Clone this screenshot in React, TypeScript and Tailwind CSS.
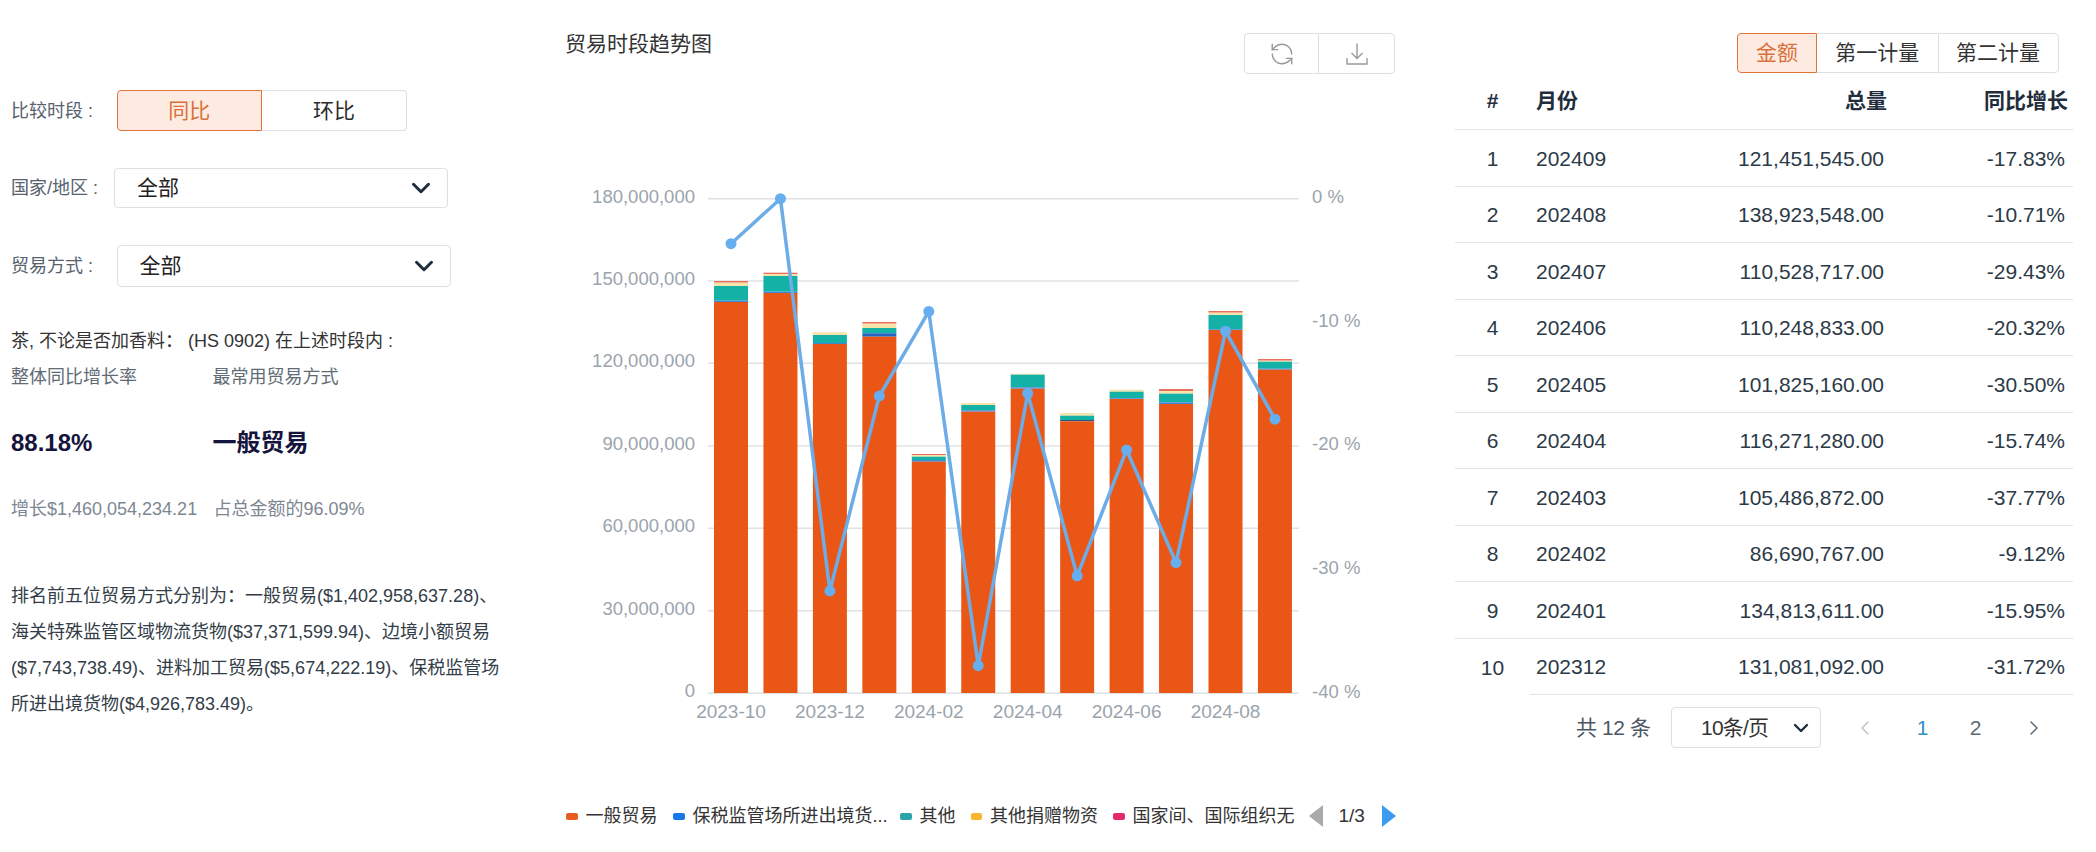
import { ChevronDown, ChevronLeft, ChevronRight, RefreshCcw } from 'lucide-react';

const ORANGE = '#ea5616';
const TEAL = '#14b1a6';
const CREAM = '#f6e3aa';
const RED = '#e86f5c';
const BLUE = '#3f86d6';

// chart drawn in page pixels (viewBox offset below), each bar listed top-down as [from, to, colour]
const bars: [number, number, string][][] = [
  [[281, 282.7, RED], [282.7, 286, CREAM], [286, 300.7, TEAL], [300.7, 302, BLUE], [302, 693, ORANGE]],
  [[272.7, 274, RED], [274, 276, CREAM], [276, 291.7, TEAL], [291.7, 293, BLUE], [293, 693, ORANGE]],
  [[332.3, 335, CREAM], [335, 343, TEAL], [343, 344, BLUE], [344, 693, ORANGE]],
  [[322, 323.7, RED], [323.7, 328, CREAM], [328, 333.3, TEAL], [333.3, 336.7, '#2364c4'], [336.7, 693, ORANGE]],
  [[454, 455, RED], [455, 456.7, CREAM], [456.7, 460, TEAL], [460, 461.7, BLUE], [461.7, 693, ORANGE]],
  [[403, 405, CREAM], [405, 410.3, TEAL], [410.3, 411.7, BLUE], [411.7, 693, ORANGE]],
  [[373.7, 374.7, CREAM], [374.7, 387.3, TEAL], [387.3, 388.7, BLUE], [388.7, 693, ORANGE]],
  [[413, 415.7, CREAM], [415.7, 420, TEAL], [420, 421.3, '#33507a'], [421.3, 693, ORANGE]],
  [[389.7, 391.7, CREAM], [391.7, 398.3, TEAL], [398.3, 399, BLUE], [399, 693, ORANGE]],
  [[389, 391, RED], [391, 393.7, CREAM], [393.7, 402.3, TEAL], [402.3, 404, BLUE], [404, 693, ORANGE]],
  [[311, 312.7, RED], [312.7, 315, CREAM], [315, 329.3, TEAL], [329.3, 330, BLUE], [330, 693, ORANGE]],
  [[359, 360.7, RED], [360.7, 361.7, CREAM], [361.7, 368.7, TEAL], [368.7, 369.7, BLUE], [369.7, 693, ORANGE]],
];

const growth = [-3.64, 0, -31.72, -15.95, -9.12, -37.77, -15.74, -30.5, -20.32, -29.43, -10.71, -17.83];

const leftTicks = [
  { y: 198.7, label: '180,000,000' },
  { y: 281, label: '150,000,000' },
  { y: 363.3, label: '120,000,000' },
  { y: 446, label: '90,000,000' },
  { y: 528.3, label: '60,000,000' },
  { y: 610.7, label: '30,000,000' },
  { y: 693.3, label: '0' },
];

const rightTicks = ['0 %', '-10 %', '-20 %', '-30 %', '-40 %'];
const months = ['2023-10', '2023-12', '2024-02', '2024-04', '2024-06', '2024-08'];

const rows = [
  ['202409', '121,451,545.00', '-17.83%'],
  ['202408', '138,923,548.00', '-10.71%'],
  ['202407', '110,528,717.00', '-29.43%'],
  ['202406', '110,248,833.00', '-20.32%'],
  ['202405', '101,825,160.00', '-30.50%'],
  ['202404', '116,271,280.00', '-15.74%'],
  ['202403', '105,486,872.00', '-37.77%'],
  ['202402', '86,690,767.00', '-9.12%'],
  ['202401', '134,813,611.00', '-15.95%'],
  ['202312', '131,081,092.00', '-31.72%'],
];

const legend = [
  { color: '#ea5b22', label: '一般贸易', gap: '' },
  { color: '#1677e8', label: '保税监管场所进出境货...', gap: 'ml-[15.5px]' },
  { color: '#2aa4a8', label: '其他', gap: 'ml-[12.5px]' },
  { color: '#f9b530', label: '其他捐赠物资', gap: 'ml-[15px]' },
  { color: '#e5296f', label: '国家间、国际组织无', gap: 'ml-[15px]' },
];

const barX = (i: number) => 731 + i * 49.45;
const lineY = (p: number) => 198.7 + (-p / 40) * 494.6;

function Chart() {
  const points = growth.map((p, i) => `${barX(i)},${lineY(p)}`).join(' ');
  return (
    <svg viewBox="566 180 850 560" className="mt-[106px] h-[560px] w-[850px]">
      {leftTicks.map((t) => (
        <g key={t.y}>
          <line x1="708" x2="1299" y1={t.y} y2={t.y} stroke="#dfe2e5" strokeWidth="1.5" />
          <text x="695" y={t.y - 1} textAnchor="end" dominantBaseline="middle" fontSize="18.5" fill="#9aa4ac">
            {t.label}
          </text>
        </g>
      ))}
      {rightTicks.map((t, i) => (
        <text key={t} x="1312" y={198 + i * 123.7} dominantBaseline="middle" fontSize="18.5" fill="#9aa4ac">
          {t}
        </text>
      ))}
      {months.map((m, i) => (
        <text key={m} x={barX(i * 2)} y="713" textAnchor="middle" dominantBaseline="middle" fontSize="19" fill="#9aa4ac">
          {m}
        </text>
      ))}
      {bars.map((segments, i) =>
        segments.map(([from, to, color]) => (
          <rect key={`${i}-${from}`} x={barX(i) - 17} y={from} width="34" height={to - from} fill={color} />
        )),
      )}
      <polyline points={points} fill="none" stroke="#6cade8" strokeWidth="3.5" strokeLinejoin="round" />
      {growth.map((p, i) => (
        <circle key={i} cx={barX(i)} cy={lineY(p)} r="5.5" fill="#66aeef" />
      ))}
    </svg>
  );
}

function Select({ className }: { className: string }) {
  return (
    <div className={`flex items-center justify-between rounded border border-[#dcdfe6] bg-white pl-[22px] pr-[11px] text-[21px] text-[#222] ${className}`}>
      全部
      <ChevronDown size={30} strokeWidth={2.4} className="text-[#1f2d3d]" />
    </div>
  );
}

export default function App() {
  const watermarks = [130, 503, 893, 1266, 1640, 2005].flatMap((x) => [287, 585].map((y) => ({ x, y })));

  return (
    <div className="relative flex h-[852px] w-[2096px] overflow-hidden bg-white font-['Liberation_Sans','Noto_Sans_CJK_SC',sans-serif]">
      {/* 左侧筛选 */}
      <div className="w-[566px] shrink-0 pl-[11px] pt-[90px] text-[18px] leading-[36px]">
        <div className="flex h-[41px] items-center">
          <span className="w-[105.5px] text-[#56626d]">比较时段 :</span>
          <div className="flex h-[41px] w-[290.5px] text-[21px]">
            <div className="flex w-[145.5px] items-center justify-center rounded-l border border-[#e2733b] bg-[#fdebe1] text-[#d9703a]">同比</div>
            <div className="flex flex-1 items-center justify-center rounded-r border border-l-0 border-[#dcdfe6] text-[#2b2b2b]">环比</div>
          </div>
        </div>
        <div className="mt-[37px] flex h-[40px] items-center">
          <span className="w-[103px] text-[#56626d]">国家/地区 :</span>
          <Select className="h-[40px] w-[334px]" />
        </div>
        <div className="mt-[37px] flex h-[42px] items-center">
          <span className="w-[105.5px] text-[#56626d]">贸易方式 :</span>
          <Select className="h-[42px] w-[334px]" />
        </div>
        <p className="mt-[36px] text-[#333]">茶, 不论是否加香料： (HS 0902) 在上述时段内 :</p>
        <div className="flex text-[#5f6c76]">
          <span className="w-[201.5px]">整体同比增长率</span>
          <span>最常用贸易方式</span>
        </div>
        <div className="mt-[30px] flex text-[24px] font-bold text-[#14143c]">
          <span className="w-[201.5px]">88.18%</span>
          <span>一般贸易</span>
        </div>
        <div className="mt-[30px] flex text-[#7d8791]">
          <span className="w-[202.5px]">增长$1,460,054,234.21</span>
          <span>占总金额的96.09%</span>
        </div>
        <p className="mt-[51px] w-[495px] text-[#333d47]">
          排名前五位贸易方式分别为：一般贸易($1,402,958,637.28)、海关特殊监管区域物流货物($37,371,599.94)、边境小额贸易($7,743,738.49)、进料加工贸易($5,674,222.19)、保税监管场所进出境货物($4,926,783.49)。
        </p>
      </div>

      {/* 趋势图 */}
      <div className="w-[889px] shrink-0 pt-[33px]">
        <div className="flex h-[41px] w-[829px] items-center justify-between">
          <h2 className="-ml-[1px] -mt-[20px] text-[21px] font-normal text-[#333]">贸易时段趋势图</h2>
          <div className="flex h-[41px] w-[151px] rounded border border-[#dcdfe6] text-[#9a9a9a]">
            <div className="flex w-[74px] items-center justify-center border-r border-[#dcdfe6]">
              <RefreshCcw size={26} strokeWidth={1.3} />
            </div>
            <div className="flex flex-1 items-center justify-center">
              <svg viewBox="0 0 22 22" fill="none" stroke="currentColor" strokeWidth="1.4" className="h-[22px] w-[22px]">
                <path d="M11 0.5v15M5.5 10l5.5 5.5 5.5-5.5M1 15v6h20v-6" />
              </svg>
            </div>
          </div>
        </div>
        <Chart />
        <div className="mt-[64px] flex h-[24px] items-center text-[18px] text-[#333]">
          {legend.map((item) => (
            <div key={item.label} className={`flex items-center gap-[8px] ${item.gap}`}>
              <span className="h-[7px] w-[11.5px] rounded-[2px]" style={{ backgroundColor: item.color }} />
              {item.label}
            </div>
          ))}
          <svg viewBox="0 0 14 22" className="ml-[14px] h-[22px] w-[14px]">
            <path d="M14 0v22L0 11z" fill="#aaaaaa" />
          </svg>
          <span className="ml-[16px] text-[19px]">1/3</span>
          <svg viewBox="0 0 14 22" className="ml-[17.5px] h-[22px] w-[14px]">
            <path d="M0 0v22L14 11z" fill="#3a9bf0" />
          </svg>
        </div>
      </div>

      {/* 右侧表格 */}
      <div className="w-[618px] shrink-0 pt-[33px]">
        <div className="flex justify-end pr-[14.5px]">
          <div className="flex h-[40px] text-[21px] text-[#333]">
            <div className="flex w-[80px] items-center justify-center rounded-l border border-[#e2733b] bg-[#fdebe1] text-[#d9703a]">金额</div>
            <div className="flex w-[120.5px] items-center justify-center border-y border-[#dcdfe6]">第一计量</div>
            <div className="flex w-[121px] items-center justify-center rounded-r border border-[#dcdfe6]">第二计量</div>
          </div>
        </div>
        <table className="w-[618px] table-fixed border-separate border-spacing-0 text-[21px] text-[#2c3a47]">
          <colgroup>
            <col className="w-[75px]" />
            <col className="w-[180px]" />
            <col className="w-[190px]" />
            <col className="w-[173px]" />
          </colgroup>
          <thead>
            <tr className="h-[57px] text-[#1f2d3d]">
              <th className="border-b border-[#e2e5e8] text-center font-bold">#</th>
              <th className="border-b border-[#e2e5e8] pl-[6px] text-left font-bold">月份</th>
              <th className="border-b border-[#e2e5e8] pr-[13px] text-right font-bold">总量</th>
              <th className="border-b border-[#e2e5e8] pr-[5px] text-right font-bold">同比增长</th>
            </tr>
          </thead>
          <tbody>
            {rows.map(([month, total, rate], i) => (
              <tr key={month} className="h-[56.5px]">
                <td className={`pt-[1px] text-center ${i < rows.length - 1 ? 'border-b border-[#e2e5e8]' : ''}`}>{i + 1}</td>
                <td className="border-b border-[#e2e5e8] pl-[6px] pt-[1px]">{month}</td>
                <td className="border-b border-[#e2e5e8] pr-[16px] pt-[1px] text-right">{total}</td>
                <td className="border-b border-[#e2e5e8] pr-[8px] pt-[1px] text-right">{rate}</td>
              </tr>
            ))}
          </tbody>
        </table>
        <div className="mt-[12px] flex h-[41px] items-center pl-[121px] text-[21px] text-[#4a5763]">
          <span className="w-[95px] tracking-[-0.4px]">共 12 条</span>
          <div className="flex h-[41px] w-[149.5px] items-center justify-between rounded border border-[#dcdfe6] pl-[29px] pr-[7px] tracking-[-0.8px] text-[#333]">
            10条/页
            <ChevronDown size={24} strokeWidth={2.4} className="text-[#1f2d3d]" />
          </div>
          <ChevronLeft size={24} strokeWidth={1.5} className="ml-[32px] text-[#c0c4cc]" />
          <span className="ml-[34px] w-[24px] text-center text-[#2f8fc8]">1</span>
          <span className="ml-[29px] w-[24px] text-center text-[#5c6b77]">2</span>
          <ChevronRight size={24} strokeWidth={1.5} className="ml-[34px] text-[#5c6b77]" />
        </div>
      </div>

      {/* 水印 */}
      {watermarks.map((w) => (
        <span
          key={`${w.x}-${w.y}`}
          className="pointer-events-none absolute -translate-x-1/2 -translate-y-1/2 -rotate-30 text-[22px] text-black/[0.025]"
          style={{ left: w.x, top: w.y }}
        >
          TOPEASE
        </span>
      ))}
    </div>
  );
}
